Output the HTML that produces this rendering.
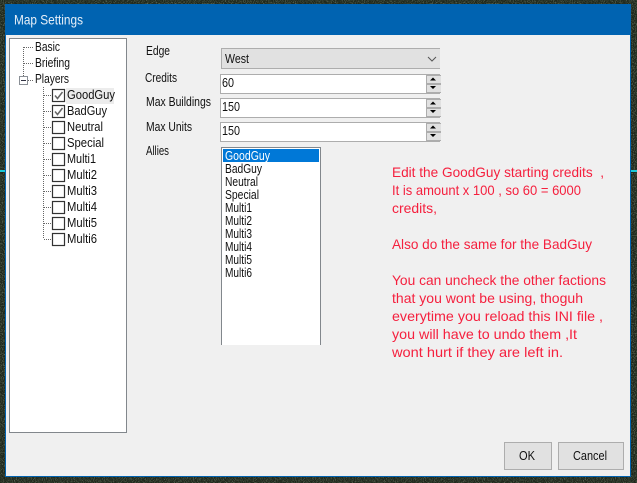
<!DOCTYPE html>
<html><head><meta charset="utf-8"><title>Map Settings</title>
<style>
html,body{margin:0;padding:0}
body{width:637px;height:483px;position:relative;overflow:hidden;background:#1f281c;font-family:"Liberation Sans",sans-serif}
div{position:absolute;box-sizing:border-box}
svg{position:absolute;left:0;top:0}
.num{background:#fff;border:1px solid #adadad;border-right:0;left:220px;width:220px;height:20px}
.sp{left:205px;width:15px;height:9px;background:#e1e1e1;border:1px solid #adadad;border-right:0}
.btn{background:#e1e1e1;border:1px solid #adadad;top:442px;height:28px}
text{font-family:"Liberation Sans",sans-serif;font-size:12.500px;fill:#111;}
.r text{font-size:14px;fill:#f5203e}
</style></head><body>
<svg width="637" height="483"><filter id="n"><feTurbulence type="fractalNoise" baseFrequency="0.9" numOctaves="2"/><feColorMatrix values="0 0 0 0 .2 0 0 0 0 .26 0 0 0 0 .18 0 0 0 2 -.9"/></filter><rect width="637" height="483" filter="url(#n)"/></svg>
<div style="left:0;top:170px;width:637px;height:2px;background:#19c8d8"></div>
<div style="left:5px;top:4px;width:626px;height:473px;background:#f0f0f0;border:1px solid #0063b1;border-width:0 1px 1px 1px"></div>
<div style="left:5px;top:4px;width:626px;height:31px;background:#0063b1"></div>
<div style="left:9px;top:38px;width:118px;height:395px;background:#fff;border:1px solid #82878c"></div>
<div style="left:66px;top:88px;width:48px;height:16px;background:#ececec"></div>
<div style="left:221px;top:48px;width:219px;height:21px;background:#e1e1e1;border:1px solid #adadad;border-right:0"></div>
<div class="num" style="top:74px"><div class="sp" style="top:0"></div><div class="sp" style="top:9px"></div></div>
<div class="num" style="top:98px"><div class="sp" style="top:0"></div><div class="sp" style="top:9px"></div></div>
<div class="num" style="top:122px"><div class="sp" style="top:0"></div><div class="sp" style="top:9px"></div></div>
<div style="left:221px;top:147px;width:100px;height:198px;background:#fff;border:1px solid #82878c;border-bottom:0"></div>
<div style="left:223px;top:149px;width:96px;height:13px;background:#0078d7"></div>
<div class="btn" style="left:504px;width:48px"></div>
<div class="btn" style="left:558px;width:66px"></div>
<svg width="637" height="483">
<g stroke="#666" stroke-dasharray="1 1" fill="none">
<path d="M23.500 47V76M24 47.500H34M24 63.500H34M28 80.500H34"/>
<path d="M43.500 87V239M44 95.500H52M44 111.500H52M44 127.500H52M44 143.500H52M44 159.500H52M44 175.500H52M44 191.500H52M44 207.500H52M44 223.500H52M44 239.500H52"/>
</g>
<rect x="19.500" y="76.500" width="8" height="8" fill="#fff" stroke="#8a8f96"/>
<path d="M21 80.500H26" stroke="#334" fill="none"/>
<g fill="#fff" stroke="#333" stroke-width="1.200">
<rect x="52.500" y="89.500" width="12" height="12"/><rect x="52.500" y="105.500" width="12" height="12"/>
<rect x="52.500" y="121.500" width="12" height="12"/><rect x="52.500" y="137.500" width="12" height="12"/>
<rect x="52.500" y="153.500" width="12" height="12"/><rect x="52.500" y="169.500" width="12" height="12"/>
<rect x="52.500" y="185.500" width="12" height="12"/><rect x="52.500" y="201.500" width="12" height="12"/>
<rect x="52.500" y="217.500" width="12" height="12"/><rect x="52.500" y="233.500" width="12" height="12"/>
</g>
<path d="M55 95.500L57.500 98.500L62.500 92M55 111.500L57.500 114.500L62.500 108" stroke="#666" stroke-width="1.500" fill="none"/>
<path d="M428 57L432 61L436 57" stroke="#555" fill="none"/>
<path d="M433 77.500L430 80.500H436ZM430 86H436L433 89ZM433 101.500L430 104.500H436ZM430 110H436L433 113ZM433 125.500L430 128.500H436ZM430 134H436L433 137Z" fill="#000"/>
<text x="14" y="24.500" style="font-size:14px;fill:#e6eff8" textLength="69" lengthAdjust="spacingAndGlyphs">Map Settings</text>
<text x="35" y="51" textLength="25" lengthAdjust="spacingAndGlyphs">Basic</text>
<text x="35" y="67" textLength="35" lengthAdjust="spacingAndGlyphs">Briefing</text>
<text x="35" y="83" textLength="34" lengthAdjust="spacingAndGlyphs">Players</text>
<text x="67" y="99" textLength="48" lengthAdjust="spacingAndGlyphs">GoodGuy</text>
<text x="67" y="115" textLength="40" lengthAdjust="spacingAndGlyphs">BadGuy</text>
<text x="67" y="131" textLength="36" lengthAdjust="spacingAndGlyphs">Neutral</text>
<text x="67" y="147" textLength="37" lengthAdjust="spacingAndGlyphs">Special</text>
<text x="67" y="163" textLength="29" lengthAdjust="spacingAndGlyphs">Multi1</text>
<text x="67" y="179" textLength="30" lengthAdjust="spacingAndGlyphs">Multi2</text>
<text x="67" y="195" textLength="30" lengthAdjust="spacingAndGlyphs">Multi3</text>
<text x="67" y="211" textLength="30" lengthAdjust="spacingAndGlyphs">Multi4</text>
<text x="67" y="227" textLength="30" lengthAdjust="spacingAndGlyphs">Multi5</text>
<text x="67" y="243" textLength="30" lengthAdjust="spacingAndGlyphs">Multi6</text>
<text x="146" y="55" textLength="24" lengthAdjust="spacingAndGlyphs">Edge</text>
<text x="145" y="82" textLength="32" lengthAdjust="spacingAndGlyphs">Credits</text>
<text x="146" y="106" textLength="65" lengthAdjust="spacingAndGlyphs">Max Buildings</text>
<text x="146" y="131" textLength="46" lengthAdjust="spacingAndGlyphs">Max Units</text>
<text x="146" y="155" textLength="23" lengthAdjust="spacingAndGlyphs">Allies</text>
<text x="225" y="63" textLength="24" lengthAdjust="spacingAndGlyphs">West</text>
<text x="222" y="87" textLength="12" lengthAdjust="spacingAndGlyphs">60</text>
<text x="222" y="111" textLength="18" lengthAdjust="spacingAndGlyphs">150</text>
<text x="222" y="135" textLength="18" lengthAdjust="spacingAndGlyphs">150</text>
<text x="225" y="160" textLength="45" lengthAdjust="spacingAndGlyphs" style="fill:#fff">GoodGuy</text>
<text x="225" y="173" textLength="37" lengthAdjust="spacingAndGlyphs">BadGuy</text>
<text x="225" y="186" textLength="33" lengthAdjust="spacingAndGlyphs">Neutral</text>
<text x="225" y="199" textLength="34" lengthAdjust="spacingAndGlyphs">Special</text>
<text x="225" y="212" textLength="27" lengthAdjust="spacingAndGlyphs">Multi1</text>
<text x="225" y="225" textLength="27" lengthAdjust="spacingAndGlyphs">Multi2</text>
<text x="225" y="238" textLength="27" lengthAdjust="spacingAndGlyphs">Multi3</text>
<text x="225" y="251" textLength="27" lengthAdjust="spacingAndGlyphs">Multi4</text>
<text x="225" y="264" textLength="27" lengthAdjust="spacingAndGlyphs">Multi5</text>
<text x="225" y="277" textLength="27" lengthAdjust="spacingAndGlyphs">Multi6</text>
<text x="519" y="460" textLength="16" lengthAdjust="spacingAndGlyphs">OK</text>
<text x="573" y="460" textLength="34" lengthAdjust="spacingAndGlyphs">Cancel</text>
<g class="r">
<text x="392" y="177" textLength="212" lengthAdjust="spacingAndGlyphs" xml:space="preserve">Edit the GoodGuy starting credits  ,</text>
<text x="392" y="195" textLength="189" lengthAdjust="spacingAndGlyphs">It is amount x 100 , so 60 = 6000</text>
<text x="392" y="213" textLength="45" lengthAdjust="spacingAndGlyphs">credits,</text>
<text x="392" y="249" textLength="200" lengthAdjust="spacingAndGlyphs">Also do the same for the BadGuy</text>
<text x="392" y="285" textLength="214" lengthAdjust="spacingAndGlyphs">You can uncheck the other factions</text>
<text x="392" y="303" textLength="191" lengthAdjust="spacingAndGlyphs">that you wont be using, thoguh</text>
<text x="392" y="321" textLength="211" lengthAdjust="spacingAndGlyphs">everytime you reload this INI file ,</text>
<text x="392" y="339" textLength="185" lengthAdjust="spacingAndGlyphs">you will have to undo them ,It</text>
<text x="392" y="357" textLength="171" lengthAdjust="spacingAndGlyphs">wont hurt if they are left in.</text>
</g>
</svg>
</body></html>
